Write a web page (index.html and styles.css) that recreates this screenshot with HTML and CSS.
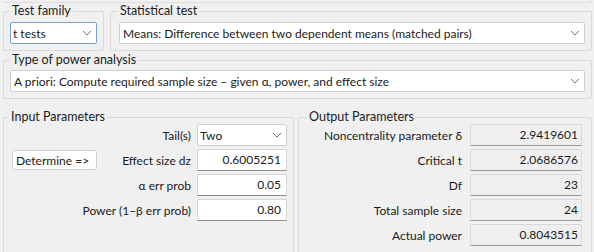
FILE: index.html
```html
<!DOCTYPE html>
<html lang="en">
<head>
    <meta charset="UTF-8">
    <meta name="viewport" content="width=device-width, initial-scale=1.0">
    <title>G*Power</title>
<link rel="stylesheet" href="styles.css">
</head>
<body>
    <div class="top-strip"></div>
    <div class="row">
        <fieldset class="group family">
            <legend>Test family</legend>
            <div class="select focused">
                <span>t tests</span>
                <svg class="chev" width="10" height="6" viewBox="0 0 10 6"><path d="M1 1 L5 5 L9 1" fill="none" stroke="#6b6b6b" stroke-width="1"/></svg>
            </div>
        </fieldset>
        <fieldset class="group stat">
            <legend>Statistical test</legend>
            <div class="select">
                <span>Means: Difference between two dependent means (matched pairs)</span>
                <svg class="chev" width="10" height="6" viewBox="0 0 10 6"><path d="M1 1 L5 5 L9 1" fill="none" stroke="#6b6b6b" stroke-width="1"/></svg>
            </div>
        </fieldset>
    </div>
    <fieldset class="group analysis">
        <legend>Type of power analysis</legend>
        <div class="select">
            <span>A priori: Compute required sample size – given α, power, and effect size</span>
            <svg class="chev" width="10" height="6" viewBox="0 0 10 6"><path d="M1 1 L5 5 L9 1" fill="none" stroke="#6b6b6b" stroke-width="1"/></svg>
        </div>
    </fieldset>
    <div class="row params">
        <fieldset class="group input-params">
            <legend>Input Parameters</legend>
            <div class="prow">
                <span class="label">Tail(s)</span>
                <div class="select tail">
                    <span>Two</span>
                    <svg class="chev" width="10" height="6" viewBox="0 0 10 6"><path d="M1 1 L5 5 L9 1" fill="none" stroke="#6b6b6b" stroke-width="1"/></svg>
                </div>
            </div>
            <div class="prow">
                <button class="btn">Determine =&gt;</button>
                <span class="label">Effect size dz</span>
                <div class="field">0.6005251</div>
            </div>
            <div class="prow">
                <span class="label">α err prob</span>
                <div class="field">0.05</div>
            </div>
            <div class="prow">
                <span class="label">Power (1–β err prob)</span>
                <div class="field">0.80</div>
            </div>
        </fieldset>
        <fieldset class="group output-params">
            <legend>Output Parameters</legend>
            <div class="prow">
                <span class="label">Noncentrality parameter δ</span>
                <div class="field ro">2.9419601</div>
            </div>
            <div class="prow">
                <span class="label">Critical t</span>
                <div class="field ro">2.0686576</div>
            </div>
            <div class="prow">
                <span class="label">Df</span>
                <div class="field ro">23</div>
            </div>
            <div class="prow">
                <span class="label">Total sample size</span>
                <div class="field ro">24</div>
            </div>
            <div class="prow">
                <span class="label">Actual power</span>
                <div class="field ro">0.8043515</div>
            </div>
        </fieldset>
    </div>
</body>
</html>
```

FILE: styles.css
```css
*{
    margin: 0;
    padding: 0;
    box-sizing: border-box;
}
body{
    background-color: #f0f0f0;
    font-family: Lato, "Noto Sans", sans-serif;
    font-size: 12px;
    color: #1b1b1b;
    padding: 0 2px 0 3px;
    overflow: hidden;
}
.top-strip{
    height: 3px;
    border-bottom: 1px solid #dedede;
    border-right: 1px solid #dedede;
}
.row{
    display: flex;
    gap: 6px;
}
.group{
    min-width: 0;
    border: 1px solid #dadada;
    border-radius: 2px;
    padding: 4px 6px 6px;
}
.group legend{
    padding: 0 2px;
    line-height: 14px;
    font-size: 12.5px;
}
.family{
    width: 101px;
    flex: none;
    margin-top: 1px;
}
.stat{
    flex: 1;
    margin-top: 1px;
    padding-left: 8px;
}
.stat legend{
    margin-left: -1px;
}
.analysis{
    margin-top: 2px;
    padding-top: 3px;
}
.select{
    height: 22px;
    background: #fff;
    border: 1px solid #cfcfcf;
    border-radius: 2px;
    display: flex;
    align-items: center;
    justify-content: space-between;
    padding: 0 4px 0 3px;
    white-space: nowrap;
}
.select.focused{
    border-color: #7ba2cf;
    padding-left: 2px;
}
.chev{
    flex: none;
}
.params{
    margin-top: 11px;
    gap: 4px;
}
.input-params{
    width: 291px;
    flex: none;
    height: 150px;
    padding: 0 6px 0 7px;
}
.input-params legend{
    margin-left: -2px;
}
.output-params{
    flex: 1;
    height: 150px;
    padding: 0 9px 0 8px;
}
.prow{
    display: flex;
    align-items: center;
    justify-content: flex-end;
    gap: 6px;
    height: 22px;
    margin-bottom: 3px;
    white-space: nowrap;
}
.prow .field, .prow .select{
    width: 90px;
    flex: none;
    height: 22px;
}
.prow .select.tail{
    padding-left: 2px;
}
.prow .btn{
    margin-right: auto;
}
.output-params .prow{
    gap: 8px;
}
.output-params .prow .field{
    width: 112px;
}
.field{
    background: #fff;
    border: 1px solid #d6d6d6;
    border-bottom-color: #8c8c8c;
    text-align: right;
    padding: 0 5px;
    line-height: 20px;
}
.field.ro{
    background: #efefef;
    border-color: #d9d9d9;
    border-bottom-color: #9a9a9a;
    padding-right: 3px;
}
.btn{
    font: inherit;
    color: inherit;
    width: 85px;
    height: 20px;
    background: #fff;
    border: 1px solid #cfcfcf;
    border-radius: 3px;
    padding: 0 3px;
    text-align: left;
    margin-left: 1px;
}
```
